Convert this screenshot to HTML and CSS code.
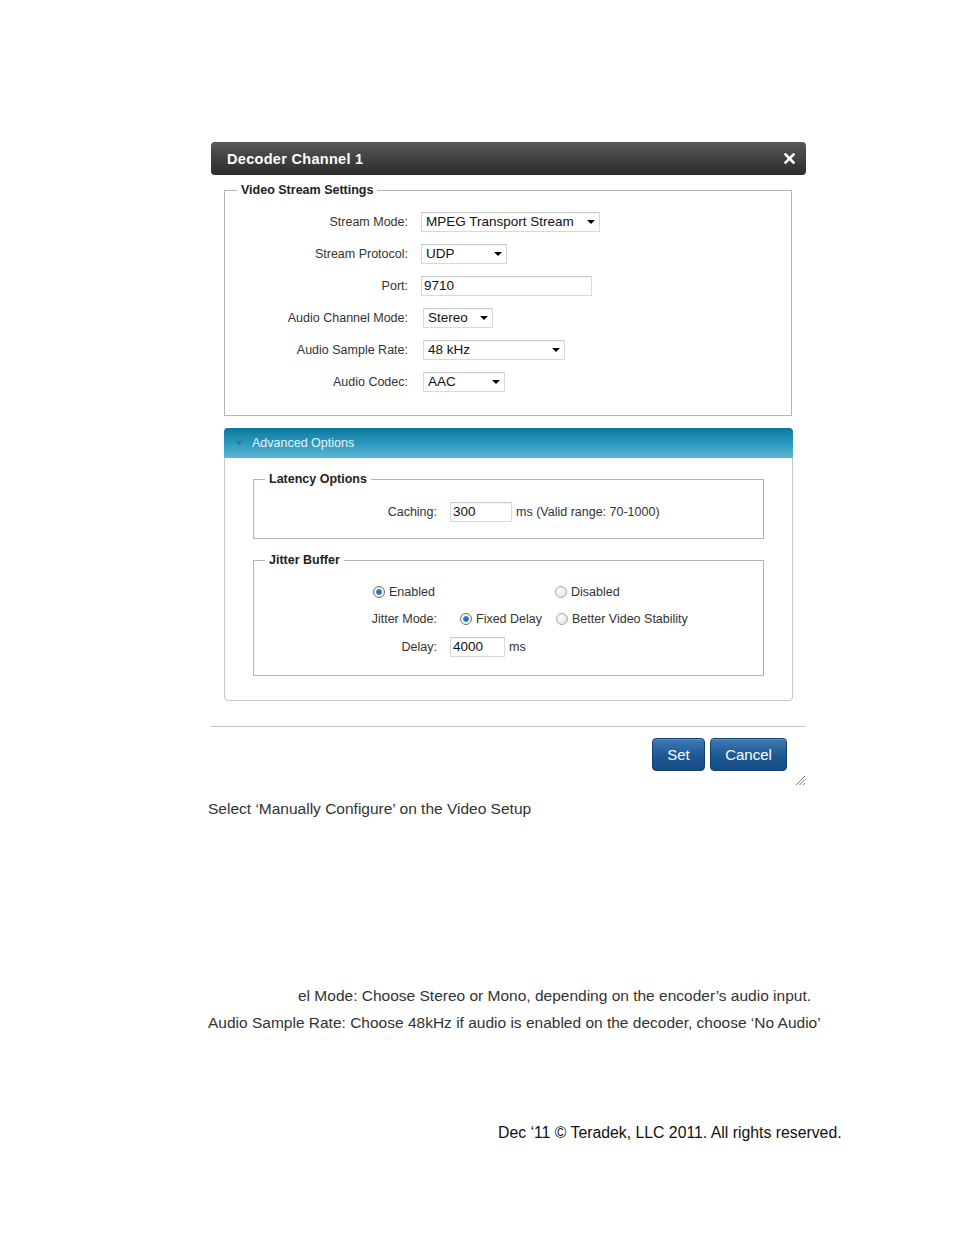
FILE: index.html
```html
<!DOCTYPE html>
<html>
<head>
<meta charset="utf-8">
<link rel="stylesheet" href="styles.css">
</head>
<body>
<div class="page">
  <div class="dialog">
    <div class="titlebar">
      <span class="title">Decoder Channel 1</span>
      <svg class="close" width="11" height="11" viewBox="0 0 11 11"><path d="M1.5 1.5 L9.5 9.5 M9.5 1.5 L1.5 9.5" stroke="#fff" stroke-width="2.6" stroke-linecap="square"/></svg>
    </div>
    <div class="dbody">
      <fieldset class="group main">
        <legend>Video Stream Settings</legend>
        <div class="row"><label>Stream Mode:</label><div class="select" style="width:179px">MPEG Transport Stream<i class="caret"></i></div></div>
        <div class="row"><label>Stream Protocol:</label><div class="select" style="width:86px">UDP<i class="caret"></i></div></div>
        <div class="row"><label>Port:</label><div class="input" style="width:171px">9710</div></div>
        <div class="row"><label>Audio Channel Mode:</label><div class="select shift" style="width:70px">Stereo<i class="caret"></i></div></div>
        <div class="row"><label>Audio Sample Rate:</label><div class="select shift" style="width:142px">48 kHz<i class="caret"></i></div></div>
        <div class="row"><label>Audio Codec:</label><div class="select shift" style="width:82px">AAC<i class="caret"></i></div></div>
      </fieldset>

      <div class="panel">
        <div class="panel-head"><i class="tri"></i>Advanced Options</div>
        <div class="panel-body">
          <fieldset class="group inner latency">
            <legend>Latency Options</legend>
            <div class="row"><label>Caching:</label><div class="inline"><div class="input" style="width:62px">300</div><span class="unit">ms (Valid range: 70-1000)</span></div></div>
          </fieldset>
          <fieldset class="group inner jitter">
            <legend>Jitter Buffer</legend>
            <div class="row r27 onoff">
              <span class="opt first"><i class="radio on"></i>Enabled</span>
              <span class="opt"><i class="radio"></i>Disabled</span>
            </div>
            <div class="row r28"><label>Jitter Mode:</label><div class="inline modes"><span class="opt fd"><i class="radio on"></i>Fixed Delay</span><span class="opt"><i class="radio"></i>Better Video Stability</span></div></div>
            <div class="row r28"><label>Delay:</label><div class="inline"><div class="input" style="width:55px">4000</div><span class="unit">ms</span></div></div>
          </fieldset>
        </div>
      </div>
    </div>
    <div class="footer">
      <button class="btn set">Set</button>
      <button class="btn cancel">Cancel</button>
    </div>
    <div class="gripline">
      <svg class="grip" width="11" height="11" viewBox="0 0 11 11"><path d="M10 1 L1 10 M10 4.5 L4.5 10 M10 8 L8 10" stroke="#777" stroke-width="1"/></svg>
    </div>
  </div>

  <p class="txt first">Select ‘Manually Configure’ on the Video Setup</p>
  <p class="txt mode">el Mode: Choose Stereo or Mono, depending on the encoder’s audio input.</p>
  <p class="txt rate">Audio Sample Rate: Choose 48kHz if audio is enabled on the decoder, choose ‘No Audio’</p>
  <p class="txt copy">Dec ‘11 © Teradek, LLC 2011. All rights reserved.</p>
</div>
</body>
</html>
```

FILE: styles.css
```css
html, body {
  margin: 0;
  padding: 0;
  background: #fff;
}
body {
  font-family: "Liberation Sans", Arial, sans-serif;
}
.page {
  padding: 142px 0 0 208px;
  display: flex;
  flex-direction: column;
  align-items: flex-start;
}
.dialog {
  margin-left: 3px;
  width: 595px;
}
.titlebar {
  height: 33px;
  border-radius: 4px;
  background: linear-gradient(#585858, #2b2b2b);
  display: flex;
  align-items: center;
  justify-content: space-between;
  padding: 0 11px 0 16px;
  box-sizing: border-box;
}
.title {
  color: #fff;
  font-weight: bold;
  font-size: 14.5px;
  letter-spacing: 0.3px;
}
.close { display: block; }
.dbody {
  padding: 7px 13px 0 13px;
}
.group {
  margin: 0;
  border: 1px solid #b4b4b4;
  min-inline-size: 0;
}
.group legend {
  font-size: 12.5px;
  font-weight: bold;
  color: #222;
  line-height: 16px;
  padding: 0 4px;
  margin-left: 12px;
}
.main {
  width: 568px;
  box-sizing: border-box;
  padding: 8px 0 17px 0;
}
.row {
  display: grid;
  grid-template-columns: 183px auto;
  column-gap: 13px;
  align-items: center;
  height: 32px;
}
.row label {
  text-align: right;
  font-size: 12.5px;
  color: #333;
}
.select, .input {
  position: relative;
  height: 20px;
  box-sizing: border-box;
  border: 1px solid #d9d9d9;
  border-top-color: #c9c9c9;
  background: #fff;
  font-size: 13.5px;
  line-height: 18px;
  color: #111;
  padding-left: 4px;
  box-shadow: inset 0 1px 1px rgba(0,0,0,0.04);
}
.input { padding-left: 2px; }
.select.shift { margin-left: 2px; }
.caret {
  position: absolute;
  right: 4px;
  top: 7px;
  width: 0;
  height: 0;
  border-left: 4px solid transparent;
  border-right: 4px solid transparent;
  border-top: 4px solid #000;
}
.panel {
  margin-top: 12px;
  width: 569px;
  box-sizing: border-box;
  border: 1px solid #c8c8c8;
  border-radius: 4px;
}
.panel-head {
  height: 30px;
  margin: -1px -1px 0 -1px;
  border-radius: 4px 4px 0 0;
  background: linear-gradient(#0a789e, #2d98bf 50%, #5ab7d6);
  color: #e6f4fa;
  font-size: 12.5px;
  display: flex;
  align-items: center;
  padding-left: 12px;
}
.tri {
  width: 0;
  height: 0;
  border-left: 3.5px solid transparent;
  border-right: 3.5px solid transparent;
  border-top: 4px solid #3f6c84;
  margin-right: 10px;
}
.panel-body {
  padding: 13px 28px 24px 28px;
}
.inner {
  width: 511px;
  box-sizing: border-box;
}
.inner legend { margin-left: 11px; }
.latency { padding: 9px 0 10px 0; }
.jitter { margin-top: 13px; padding: 10px 0 14px 0; }
.r27 { height: 27px; }
.r28 { height: 28px; }
.inline {
  display: flex;
  align-items: center;
}
.unit {
  font-size: 12.5px;
  color: #333;
  margin-left: 4px;
}
.onoff {
  display: flex;
  column-gap: 0;
  padding-left: 119px;
}
.opt {
  display: inline-flex;
  align-items: center;
  font-size: 12.5px;
  color: #333;
}
.opt.first { width: 182px; }
.modes { margin-left: 10px; }
.opt.fd { width: 96px; }
.radio {
  width: 12px;
  height: 12px;
  box-sizing: border-box;
  border-radius: 50%;
  border: 1px solid #a9a9a9;
  background: radial-gradient(circle at 40% 35%, #fff, #dcdcdc);
  margin-right: 4px;
  position: relative;
}
.radio.on {
  border-color: #6f6f6f;
  background: radial-gradient(circle, #1f5fa8 0, #3d86d0 2.5px, #fff 3.5px, #e6e6e6 6px);
}
.footer {
  margin-top: 25px;
  border-top: 1px solid #c8c8c8;
  padding: 11px 19px 0 0;
  display: flex;
  justify-content: flex-end;
  gap: 5px;
}
.btn {
  height: 33px;
  box-sizing: border-box;
  border: 1px solid #123f6c;
  border-radius: 4px;
  background: linear-gradient(#3e79b3, #1c5893 55%, #154c85);
  color: #fff;
  font-family: "Liberation Sans", Arial, sans-serif;
  font-size: 15px;
  padding: 0;
  box-shadow: inset 0 1px 0 rgba(255,255,255,0.2);
}
.btn.set { width: 53px; }
.btn.cancel { width: 77px; }
.gripline {
  display: flex;
  justify-content: flex-end;
  padding-top: 4px;
}
.grip { display: block; }
.txt {
  margin: 0;
  font-size: 15.5px;
  line-height: 18px;
  color: #333;
}
.txt.first { margin-top: 14px; }
.txt.mode { margin-top: 169px; padding-left: 90px; }
.txt.rate { margin-top: 9px; }
.txt.copy { margin-top: 92px; padding-left: 290px; color: #111; font-size: 15.8px; }
```
